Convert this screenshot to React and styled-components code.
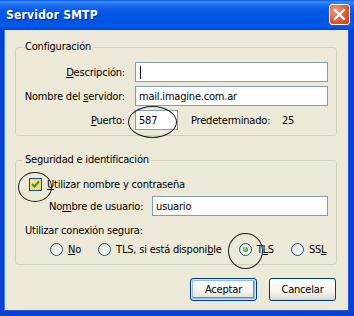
import React from "react";
import styled, { createGlobalStyle } from "styled-components";

const GlobalStyle = createGlobalStyle`
  html, body {
    margin: 0;
    padding: 0;
    background: #ffffff;
  }
  body {
    font-family: "DejaVu Sans Condensed", "Liberation Sans", sans-serif;
    font-size: 11px;
    letter-spacing: -0.2px;
    color: #000;
  }
`;

const App = () => {
  return (
    <>
      <GlobalStyle />
      <Window>
        <TitleBar>
          <Title>Servidor SMTP</Title>
          <CloseButton>
            <svg width="13" height="13" viewBox="0 0 13 13">
              <path d="M2 2 L11 11 M11 2 L2 11" stroke="#fff" strokeWidth="2.2" strokeLinecap="square" />
            </svg>
          </CloseButton>
        </TitleBar>
        <Body>
          <Group>
            <Legend>Configuración</Legend>
            <FieldGrid>
              <Label><U>D</U>escripción:</Label>
              <TextBox>
                <Caret />
              </TextBox>
              <Label>Nombre del <U>s</U>ervidor:</Label>
              <TextBox>mail.imagine.com.ar</TextBox>
              <Label><U>P</U>uerto:</Label>
              <PortRow>
                <TextBox width="43px">587</TextBox>
                <DefaultLabel>Predeterminado:</DefaultLabel>
                <span>25</span>
              </PortRow>
            </FieldGrid>
          </Group>

          <Group top="17px">
            <Legend>Seguridad e identificación</Legend>
            <SecurityBody>
              <CheckRow>
                <CheckBox>
                  <svg width="9" height="9" viewBox="0 0 9 9">
                    <path d="M1 4 L3.5 6.5 L8 1.5" stroke="#21a121" strokeWidth="2" fill="none" />
                  </svg>
                </CheckBox>
                <span><U>U</U>tilizar nombre y contraseña</span>
              </CheckRow>
              <UserRow>
                <UserLabel>No<U>m</U>bre de usuario:</UserLabel>
                <TextBox>usuario</TextBox>
              </UserRow>
              <SectionText>Utilizar conexión segura:</SectionText>
              <RadioRow>
                <RadioOption>
                  <Radio />
                  <span><U>N</U>o</span>
                </RadioOption>
                <RadioOption>
                  <Radio />
                  <span>TLS, si está disponi<U>b</U>le</span>
                </RadioOption>
                <RadioOption>
                  <Radio checked />
                  <span>T<U>L</U>S</span>
                </RadioOption>
                <RadioOption>
                  <Radio />
                  <span>SS<U>L</U></span>
                </RadioOption>
              </RadioRow>
            </SecurityBody>
          </Group>

          <ButtonRow>
            <Button primary>Aceptar</Button>
            <Button>Cancelar</Button>
          </ButtonRow>
        </Body>

        <Mark left="128px" top="106px" w="49px" h="32px" />
        <Mark left="18px" top="172px" w="34px" h="30px" />
        <Mark left="228px" top="233px" w="35px" h="36px" />
      </Window>
    </>
  );
};

const Window = styled.div`
  position: relative;
  width: 354px;
  height: 316px;
  display: flex;
  flex-direction: column;
  overflow: hidden;
`;

const TitleBar = styled.div`
  height: 30px;
  flex: none;
  display: flex;
  align-items: center;
  justify-content: space-between;
  padding: 0 4px 0 6px;
  box-sizing: border-box;
  background: linear-gradient(
    to bottom,
    #0a5ae0 0%,
    #3d8ff7 7%,
    #1a6cf0 16%,
    #0558e6 40%,
    #0054e3 70%,
    #0559ea 88%,
    #0343c6 100%
  );
`;

const Title = styled.div`
  color: #ffffff;
  font-family: "DejaVu Sans Condensed", "Liberation Sans", sans-serif;
  font-weight: bold;
  font-size: 12px;
  letter-spacing: 0.2px;
  text-shadow: 1px 1px 0 #0a2a8a;
  margin-top: -1px;
`;

const CloseButton = styled.div`
  width: 21px;
  height: 21px;
  box-sizing: border-box;
  border: 1px solid #ffffff;
  border-radius: 3px;
  display: flex;
  align-items: center;
  justify-content: center;
  margin-top: -2px;
  background: radial-gradient(circle at 30% 30%, #f0a080 0%, #e2633c 45%, #c4401a 100%);
`;

const Body = styled.div`
  flex: 1;
  display: flex;
  flex-direction: column;
  background: #ece9d8;
  border-left: 4px solid #0a3fd4;
  border-right: 5px solid #0a3fd4;
  border-bottom: 5px solid #0a3fd4;
  box-shadow: inset 1px 0 0 #3f7ff0, inset -1px 0 0 #1d5ce8, inset 0 -1px 0 #1d5ce8;
  padding-top: 10px;
`;

const Group = styled.fieldset`
  margin: ${(props) => props.top || "0"} 12px 0 11px;
  padding: 0;
  border: 1px solid #d0d0bf;
  border-radius: 3px;
  min-width: 0;
`;

const Legend = styled.legend`
  margin-left: 7px;
  padding: 0 2px;
  line-height: 14px;
  color: #000;
`;

const FieldGrid = styled.div`
  display: grid;
  grid-template-columns: 109px 1fr;
  column-gap: 10px;
  row-gap: 4px;
  align-items: center;
  padding: 8px 8px 5px 0;
`;

const Label = styled.div`
  text-align: right;
  white-space: nowrap;
`;

const U = styled.span`
  text-decoration: underline;
`;

const TextBox = styled.div`
  position: relative;
  width: ${(props) => props.width || "auto"};
  flex: ${(props) => (props.width ? "none" : "1")};
  height: 20px;
  box-sizing: border-box;
  border: 1px solid #7f9db9;
  background: #ffffff;
  padding: 0 3px;
  display: flex;
  align-items: center;
  white-space: nowrap;
`;

const Caret = styled.span`
  display: block;
  width: 1px;
  height: 13px;
  background: #000;
  margin-left: 1px;
`;

const PortRow = styled.div`
  display: flex;
  align-items: center;
`;

const DefaultLabel = styled.span`
  margin-left: 13px;
  width: 91px;
`;

const SecurityBody = styled.div`
  display: flex;
  flex-direction: column;
  padding: 9px 8px 7px 0;
`;

const CheckRow = styled.div`
  display: flex;
  align-items: center;
  gap: 5px;
  height: 16px;
  margin-left: 13px;
`;

const CheckBox = styled.div`
  width: 13px;
  height: 13px;
  box-sizing: border-box;
  border: 1px solid #1c5180;
  background: linear-gradient(135deg, #fde8b0 0%, #f8c65e 100%);
  box-shadow: inset 0 0 0 1px #fbd27a;
  display: flex;
  align-items: center;
  justify-content: center;
`;

const UserRow = styled.div`
  display: flex;
  align-items: center;
  margin-top: 4px;
  padding-left: 33px;
`;

const UserLabel = styled.span`
  width: 103px;
  flex: none;
  white-space: nowrap;
`;

const SectionText = styled.div`
  margin: 8px 0 0 9px;
  line-height: 14px;
`;

const RadioRow = styled.div`
  display: flex;
  align-items: center;
  gap: 17px;
  margin: 3px 0 0 34px;
  height: 16px;
  white-space: nowrap;
`;

const RadioOption = styled.div`
  display: flex;
  align-items: center;
  gap: 5px;
  flex: none;
`;

const Radio = styled.div`
  position: relative;
  width: 13px;
  height: 13px;
  box-sizing: border-box;
  border-radius: 50%;
  border: 1px solid #1c5180;
  background: linear-gradient(135deg, #dcdcd7 0%, #ffffff 100%);
  &::after {
    content: "";
    display: ${(props) => (props.checked ? "block" : "none")};
    position: absolute;
    left: 3px;
    top: 3px;
    width: 5px;
    height: 5px;
    border-radius: 50%;
    background: radial-gradient(circle at 40% 40%, #9cee8b 0%, #2fa82f 60%, #1c8a1c 100%);
  }
`;

const ButtonRow = styled.div`
  display: flex;
  justify-content: flex-end;
  gap: 12px;
  margin-top: 13px;
  padding-right: 13px;
`;

const Button = styled.div`
  width: 67px;
  height: 23px;
  box-sizing: border-box;
  border: 1px solid #003c74;
  border-radius: 3px;
  display: flex;
  align-items: center;
  justify-content: center;
  background: linear-gradient(to bottom, #ffffff 0%, #f4f3ee 60%, #e3e0d6 90%, #d6d0c5 100%);
  box-shadow: ${(props) =>
    props.primary
      ? "inset 0 0 0 1px #cee7ff, inset 0 0 0 2px #98b8ea, inset -1px -1px 0 2px #6982ee"
      : "none"};
`;

const Mark = styled.div`
  position: absolute;
  left: ${(props) => props.left};
  top: ${(props) => props.top};
  width: ${(props) => props.w};
  height: ${(props) => props.h};
  border: 1px solid #1a1a1a;
  border-radius: 50%;
  box-sizing: border-box;
  pointer-events: none;
`;

export default App;
